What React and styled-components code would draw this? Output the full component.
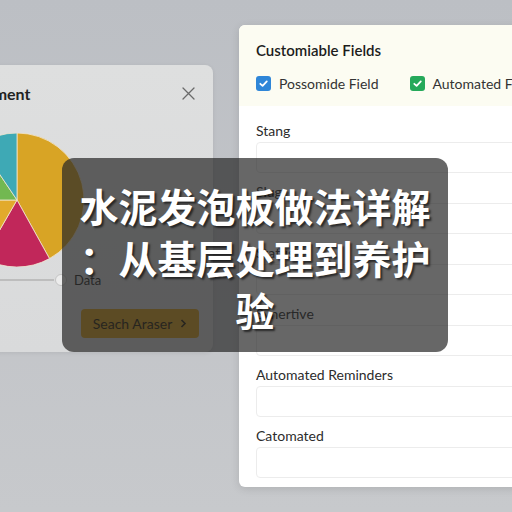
import React from "react";
import styled, { createGlobalStyle } from "styled-components";

/** global */
const GlobalStyle = createGlobalStyle`
  html, body {
    margin: 0;
    padding: 0;
  }

  body {
    font-family: Lato, "Open Sans", "Noto Sans", sans-serif;
  }
`;

/** styled components */
const Desk = styled.div`
  position: relative;
  width: 512px;
  height: 512px;
  overflow: hidden;
  background: linear-gradient(180deg, #bcbfc4 0%, #c3c5c9 60%, #c7c9cc 100%);
`;

const ChartWindow = styled.section`
  position: absolute;
  left: -80px;
  top: 65px;
  width: 293px;
  height: 287px;
  box-sizing: border-box;
  padding: 18px 17px 0 10px;
  display: flex;
  flex-direction: column;
  background: linear-gradient(180deg, #dedfdf 0%, #d9dadb 100%);
  border-radius: 8px;
  box-shadow: 0 1px 4px rgba(0, 0, 0, 0.08);
`;

const WindowHead = styled.header`
  display: flex;
  align-items: center;
  justify-content: space-between;
  height: 20px;
`;

const WindowTitle = styled.h2`
  margin: 0;
  font-size: 16px;
  font-weight: 700;
  color: #222;
`;

const CloseButton = styled.button`
  border: none;
  background: none;
  padding: 0;
  width: 16px;
  height: 16px;
  display: flex;
  align-items: center;
  justify-content: center;
  color: #666;
  cursor: pointer;
`;

const Pie = styled.svg`
  margin: 30px 0 0 20px;
  width: 134px;
  height: 134px;
  display: block;
`;

const SliderRow = styled.div`
  display: flex;
  align-items: center;
  height: 14px;
  margin-top: 6px;
`;

const Track = styled.div`
  width: 124px;
  height: 2px;
  background: #bdbdbd;
`;

const Handle = styled.div`
  width: 10px;
  height: 10px;
  border-radius: 50%;
  border: 1.5px solid #c4c4c4;
  background: #ececec;
  margin-left: 1px;
`;

const Caption = styled.span`
  margin-left: 7px;
  font-size: 13px;
  color: #2a2a2a;
`;

const ActionButton = styled.button`
  margin: 22px 0 0 151px;
  width: 118px;
  height: 29px;
  border: none;
  border-radius: 4px;
  background: #d9a01e;
  color: #2a2210;
  font-family: Lato, "Open Sans", sans-serif;
  font-size: 14px;
  display: flex;
  align-items: center;
  justify-content: center;
  gap: 8px;
  cursor: pointer;
`;

const FormWindow = styled.section`
  position: absolute;
  left: 239px;
  top: 25px;
  width: 300px;
  height: 462px;
  background: #ffffff;
  border-radius: 6px;
  overflow: hidden;
  box-shadow: 0 2px 8px rgba(0, 0, 0, 0.12);
`;

const FormHead = styled.div`
  background: #fcfcf2;
  padding: 16px 17px 0;
  height: 81px;
  box-sizing: border-box;
`;

const FormTitle = styled.h2`
  margin: 0;
  font-size: 15px;
  line-height: 18px;
  font-weight: 600;
  color: #1c1c1c;
`;

const CheckRow = styled.div`
  display: flex;
  align-items: center;
  gap: 31px;
  margin-top: 16px;
  white-space: nowrap;
`;

const CheckItem = styled.label`
  display: flex;
  align-items: center;
  gap: 8px;
  font-size: 14px;
  color: #333;
`;

const Box = styled.span`
  width: 15px;
  height: 15px;
  border-radius: 3px;
  background: ${(p) => p.$color};
  display: flex;
  align-items: center;
  justify-content: center;
`;

const FormBody = styled.div`
  padding: 16px 17px 0;
  display: flex;
  flex-direction: column;
  gap: 10px;
`;

const Field = styled.div`
  display: flex;
  flex-direction: column;
  gap: 2px;
`;

const FieldLabel = styled.label`
  font-size: 14px;
  line-height: 18px;
  color: #2c2c2c;
`;

const Input = styled.div`
  height: 31px;
  box-sizing: border-box;
  border: 1px solid #ececec;
  border-radius: 4px;
  background: #fff;
`;

const Banner = styled.div`
  position: absolute;
  left: 62px;
  top: 158px;
  width: 386px;
  height: 194px;
  box-sizing: border-box;
  padding: 0 16px;
  border-radius: 12px;
  background: rgba(38, 38, 38, 0.7);
  display: flex;
  align-items: center;
  justify-content: center;
`;

const BannerText = styled.h1`
  margin: 4px 0 0;
  width: 100%;
  text-align: center;
  font-family: "Noto Sans CJK SC", "Noto Sans", sans-serif;
  font-size: 39px;
  line-height: 52px;
  font-weight: 700;
  color: #ffffff;
  line-break: anywhere;
  word-break: break-all;
  text-shadow: 2px 2px 2px rgba(0, 0, 0, 0.6);
`;

/** pie slices, angles clockwise from twelve o'clock */
const slices = [
  { from: 0, to: 151, color: "#d8a425" },
  { from: 151, to: 210, color: "#c1275a" },
  { from: 210, to: 270, color: "#e2aa2c" },
  { from: 270, to: 326, color: "#72b851" },
  { from: 326, to: 360, color: "#3ea9b5" },
];

const point = (deg, r = 67) => {
  const a = (deg * Math.PI) / 180;
  return [67 + r * Math.sin(a), 67 - r * Math.cos(a)];
};

const slicePath = ({ from, to }) => {
  const [x1, y1] = point(from);
  const [x2, y2] = point(to);
  const large = to - from > 180 ? 1 : 0;
  return `M67 67 L${x1} ${y1} A67 67 0 ${large} 1 ${x2} ${y2} Z`;
};

const Check = () => (
  <svg width="11" height="11" viewBox="0 0 12 12">
    <path
      d="M2.5 6.3 L5 8.6 L9.6 3.6"
      fill="none"
      stroke="#fff"
      strokeWidth="1.9"
      strokeLinecap="round"
      strokeLinejoin="round"
    />
  </svg>
);

const fields = [
  "Stang",
  "Slug",
  "Status",
  "Synertive",
  "Automated Reminders",
  "Catomated",
];

/** App */
const App = () => {
  return (
    <Desk>
      <GlobalStyle />

      <ChartWindow>
        <WindowHead>
          <WindowTitle>Data Segment</WindowTitle>
          <CloseButton aria-label="close">
            <svg width="13" height="13" viewBox="0 0 13 13">
              <path
                d="M1 1 L12 12 M12 1 L1 12"
                stroke="#6a6a6a"
                strokeWidth="1.3"
                strokeLinecap="round"
              />
            </svg>
          </CloseButton>
        </WindowHead>

        <Pie viewBox="0 0 134 134">
          {slices.map((s) => (
            <path
              key={s.from}
              d={slicePath(s)}
              fill={s.color}
              stroke="#f1e6cf"
              strokeWidth="0.8"
            />
          ))}
        </Pie>

        <SliderRow>
          <Track />
          <Handle />
          <Caption>Data</Caption>
        </SliderRow>

        <ActionButton>
          Seach Araser
          <svg width="7" height="9" viewBox="0 0 7 9">
            <path
              d="M1.5 1 L5 4.5 L1.5 8"
              fill="none"
              stroke="#2a2210"
              strokeWidth="1.6"
            />
          </svg>
        </ActionButton>
      </ChartWindow>

      <FormWindow>
        <FormHead>
          <FormTitle>Customiable Fields</FormTitle>
          <CheckRow>
            <CheckItem>
              <Box $color="#2f86d8">
                <Check />
              </Box>
              Possomide Field
            </CheckItem>
            <CheckItem>
              <Box $color="#25a95a">
                <Check />
              </Box>
              Automated Fields
            </CheckItem>
          </CheckRow>
        </FormHead>

        <FormBody>
          {fields.map((name) => (
            <Field key={name}>
              <FieldLabel>{name}</FieldLabel>
              <Input />
            </Field>
          ))}
        </FormBody>
      </FormWindow>

      <Banner>
        <BannerText>水泥发泡板做法详解：从基层处理到养护验</BannerText>
      </Banner>
    </Desk>
  );
};

export default App;
